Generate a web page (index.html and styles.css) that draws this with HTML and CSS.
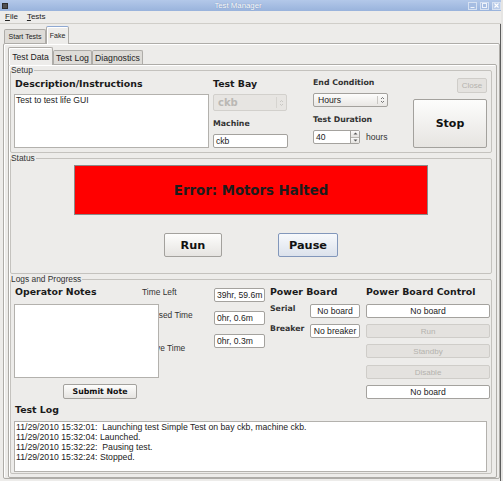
FILE: index.html
```html
<!DOCTYPE html>
<html lang="en">
<head>
<meta charset="utf-8">
<title>Test Manager</title>
<link rel="stylesheet" href="styles.css">
</head>
<body>
<div class="window">
  <div class="titlebar">
    <span class="app-icon"></span>
    <span class="title">Test Manager</span>
    <span class="wbtns">
      <span class="wbtn"><svg width="5" height="5" viewBox="0 0 5 5"><path d="M0.5 4.5H4.5" stroke="#eef3fb" stroke-width="1"/></svg></span>
      <span class="wbtn"><svg width="5" height="5" viewBox="0 0 5 5"><rect x="0.5" y="0.5" width="4" height="4" fill="none" stroke="#eef3fb" stroke-width="1"/></svg></span>
      <span class="wbtn close"><svg width="5" height="5" viewBox="0 0 5 5"><path d="M0.5 0.5L4.5 4.5M4.5 0.5L0.5 4.5" stroke="#ffffff" stroke-width="1.1"/></svg></span>
    </span>
  </div>
  <div class="menubar">
    <span class="menu"><u>F</u>ile</span>
    <span class="menu"><u>T</u>ests</span>
  </div>
  <div class="client">
    <div class="tabrow outer-tabs">
      <div class="tab otab">Start Tests</div>
      <div class="tab otab selected">Fake</div>
    </div>
    <div class="pane outer-pane">
      <div class="tabrow inner-tabs">
        <div class="tab itab selected">Test Data</div>
        <div class="tab itab">Test Log</div>
        <div class="tab itab">Diagnostics</div>
      </div>
      <div class="pane inner-pane">
        <fieldset class="group setup">
          <legend>Setup</legend>
          <div class="setup-row">
            <div class="col col-desc">
              <div class="heading">Description/Instructions</div>
              <div class="textarea desc">Test to test life GUI</div>
            </div>
            <div class="col col-bay">
              <div class="heading">Test Bay</div>
              <div class="combo bay disabled">
                <span class="combo-text">ckb</span>
                <span class="combo-arrow"><svg width="5" height="8" viewBox="0 0 5 8"><path d="M1 3L2.5 1.5L4 3M1 5L2.5 6.5L4 5" fill="none" stroke="#c2c0bc" stroke-width="0.8"/></svg></span>
              </div>
              <div class="label machine-label">Machine</div>
              <div class="field machine">ckb</div>
            </div>
            <div class="col col-end">
              <div class="label">End Condition</div>
              <div class="combo hours">
                <span class="combo-text">Hours</span>
                <span class="combo-arrow"><svg width="5" height="8" viewBox="0 0 5 8"><path d="M1 3L2.5 1.5L4 3M1 5L2.5 6.5L4 5" fill="none" stroke="#555" stroke-width="0.8"/></svg></span>
              </div>
              <div class="label duration-label">Test Duration</div>
              <div class="spin-row">
                <div class="spinner">
                  <span class="spin-text">40</span>
                  <span class="spin-btns">
                    <span class="spin-btn"><svg width="5" height="3" viewBox="0 0 5 3"><path d="M0.5 2.5L2.5 0.5L4.5 2.5Z" fill="#555"/></svg></span>
                    <span class="spin-btn"><svg width="5" height="3" viewBox="0 0 5 3"><path d="M0.5 0.5L2.5 2.5L4.5 0.5Z" fill="#555"/></svg></span>
                  </span>
                </div>
                <span class="unit">hours</span>
              </div>
            </div>
            <div class="col col-actions">
              <div class="btn close-btn disabled">Close</div>
              <div class="btn stop-btn">Stop</div>
            </div>
          </div>
        </fieldset>

        <fieldset class="group status">
          <legend>Status</legend>
          <div class="status-box">Error: Motors Halted</div>
          <div class="btn-row">
            <div class="btn big-btn run-btn">Run</div>
            <div class="btn big-btn pause-btn default">Pause</div>
          </div>
        </fieldset>

        <fieldset class="group logs">
          <legend>Logs and Progress</legend>
          <div class="logs-top">
            <div class="col notes-col">
              <div class="heading">Operator Notes</div>
              <div class="textarea notes"></div>
              <div class="btn submit-btn">Submit Note</div>
            </div>
            <div class="col time-labels">
              <div class="tlabel t1">Time Left</div>
              <div class="tlabel t2">Elapsed Time</div>
              <div class="tlabel t3">Active Time</div>
            </div>
            <div class="col time-fields">
              <div class="field tf f1">39hr, 59.6m</div>
              <div class="field tf">0hr, 0.6m</div>
              <div class="field tf">0hr, 0.3m</div>
            </div>
            <div class="col power-col">
              <div class="heading">Power Board</div>
              <div class="pb-grid">
                <div class="label">Serial</div>
                <div class="field center">No board</div>
                <div class="label">Breaker</div>
                <div class="field center">No breaker</div>
              </div>
            </div>
            <div class="col control-col">
              <div class="heading">Power Board Control</div>
              <div class="field center ctl">No board</div>
              <div class="btn ctl disabled">Run</div>
              <div class="btn ctl disabled">Standby</div>
              <div class="btn ctl disabled gap7">Disable</div>
              <div class="field center ctl">No board</div>
            </div>
          </div>
          <div class="heading testlog-heading">Test Log</div>
          <div class="textarea log">11/29/2010 15:32:01:  Launching test Simple Test on bay ckb, machine ckb.
11/29/2010 15:32:04: Launched.
11/29/2010 15:32:22:  Pausing test.
11/29/2010 15:32:24: Stopped.</div>
        </fieldset>
      </div>
    </div>
  </div>
</div>
</body>
</html>
```
FILE: styles.css
```css
* { box-sizing: border-box; }
html, body { margin: 0; padding: 0; }
body {
  width: 503px;
  height: 481px;
  overflow: hidden;
  background: #e6e5e3;
  font-family: "Liberation Sans", Arial, sans-serif;
  font-size: 8.6px;
  color: #1f1f1f;
}
.window {
  width: 501px;
  height: 481px;
  display: flex;
  flex-direction: column;
  background: #edecea;
}

/* title bar */
.titlebar {
  flex: none;
  height: 11px;
  display: flex;
  align-items: center;
  padding-left: 2px;
  background: linear-gradient(#b3c8e9, #99b3dc);
}
.app-icon {
  flex: none;
  width: 6px;
  height: 6px;
  background: #505050;
  border: 1px solid #2e2e2e;
}
.title {
  flex: 1;
  text-align: center;
  color: #ffffff;
  font-size: 7.8px;
  line-height: 11px;
  text-shadow: 0 0 1px #5d79a8;
}
.wbtns { display: flex; gap: 3px; }
.wbtn {
  width: 9px;
  height: 8px;
  border: 1px solid #d6e1f2;
  background: #a6bde2;
  display: flex;
  align-items: center;
  justify-content: center;
}
.wbtn.close { background: #b9cbe8; }

/* menu bar */
.menubar {
  flex: none;
  height: 13px;
  display: flex;
  align-items: center;
  gap: 9px;
  padding-left: 5px;
  border-bottom: 1px solid #d0cec9;
  font-size: 8px;
  line-height: 12px;
  color: #222;
}
.menu u { text-decoration: underline; text-underline-offset: 1px; }

/* client + tabs */
.client {
  flex: 1;
  border-right: 1px solid #5c5c5c;
  padding-top: 2px;
}
.tabrow {
  display: flex;
  align-items: flex-end;
  position: relative;
  z-index: 2;
  height: 18px;
  margin-bottom: -1px;
}
.outer-tabs { padding-left: 4px; }
.tab {
  height: 14px;
  margin-bottom: 1px;
  border: 1px solid #aeaca8;
  border-bottom: none;
  border-radius: 2px 2px 0 0;
  background: #dedcd8;
  display: flex;
  align-items: center;
  justify-content: center;
  color: #222;
  white-space: nowrap;
}
.tab.selected {
  height: 18px;
  margin-bottom: 0;
  background: #edecea;
  box-shadow: inset 1px 1px 0 #ffffff;
}
.otab { font-size: 7px; padding: 0 4px; }
.otab:first-child { width: 42px; }
.otab.selected { width: 23px; border-top-color: #8ea8d2; }
.itab { font-size: 8.7px; }
.itab:nth-child(1) { width: 45px; }
.itab:nth-child(2) { width: 39px; }
.itab:nth-child(3) { width: 51px; }

.pane {
  border: 1px solid #aeaca8;
  border-radius: 2px;
  box-shadow: inset 1px 1px 0 #ffffff;
  background: #edecea;
}
.outer-pane {
  margin-left: 3px;
  width: 497px;
  height: 436px;
  padding: 3px 0 0 4px;
}
.inner-pane {
  width: 489px;
  height: 414px;
  padding: 0 0 0 1px;
}

/* groups */
.group {
  margin: 0;
  padding: 3px 0 4px 0;
  width: 482px;
  min-width: 0;
  border: 1px solid #c4c2be;
  border-radius: 2px;
}
.group legend {
  padding: 0 1px 0 0;
  margin: 0;
  font-size: 8.4px;
  line-height: 10px;
  color: #333;
}
.group.status { padding: 2px 0 16px 0; }
.group.logs { padding: 2px 0 1px 0; }

.heading {
  font-family: "DejaVu Sans", sans-serif;
  font-weight: bold;
  font-size: 9.4px;
  line-height: 12px;
  color: #1a1a1a;
  white-space: nowrap;
}
.label {
  font-family: "DejaVu Sans", sans-serif;
  font-weight: bold;
  font-size: 7.8px;
  line-height: 10px;
  color: #333;
  white-space: nowrap;
}

.textarea {
  background: #ffffff;
  border: 1px solid #b3b1ad;
  line-height: 10px;
  padding: 0 1px;
  color: #222;
}
.field {
  background: #ffffff;
  border: 1px solid #a4a29e;
  border-radius: 2px;
  height: 14px;
  line-height: 12px;
  padding: 0 2px;
  overflow: hidden;
  white-space: nowrap;
  color: #222;
}
.field.center { text-align: center; padding: 0; }

.btn {
  display: flex;
  align-items: center;
  justify-content: center;
  border: 1px solid #a3a19d;
  border-radius: 2px;
  background: linear-gradient(#fdfdfc, #e6e4e1);
  color: #111;
  white-space: nowrap;
}
.btn.disabled {
  background: #e4e2df;
  border-color: #cfcdc9;
  color: #b4b2ae;
}
.btn.default {
  border-color: #8297bb;
  background: linear-gradient(#f7f9fc, #dce2ec);
}

/* setup */
.setup-row { display: flex; align-items: flex-start; }
.col { display: flex; flex-direction: column; align-items: flex-start; }
.col-desc { margin-left: 3px; width: 195px; }
.col-desc .heading { padding-left: 1px; }
.col-bay { margin-left: 4px; width: 76px; }
.col-end { margin-left: 24px; width: 90px; }
.col-actions { margin-left: 10px; width: 74px; align-items: flex-end; }

.textarea.desc { margin-top: 4px; width: 195px; height: 54px; }

.combo {
  display: flex;
  align-items: stretch;
  border-radius: 2px;
}
.combo-text { flex: 1; display: flex; align-items: center; }
.combo-arrow {
  width: 10px;
  display: flex;
  align-items: center;
  justify-content: center;
}
.combo.bay {
  margin-top: 4px;
  width: 74px;
  height: 17px;
  border: 1px solid #d2d0cc;
  background: #e7e5e2;
}
.combo.bay .combo-text {
  padding-left: 4px;
  font-family: "DejaVu Sans", sans-serif;
  font-weight: bold;
  font-size: 10px;
  color: #bab8b4;
}
.combo.bay .combo-arrow { border-left: 1px solid #d6d4d0; margin: 2px 0; }
.machine-label { margin-top: 8px; }
.field.machine { margin-top: 5px; width: 75px; }

.combo.hours {
  margin-top: 5px;
  width: 75px;
  height: 14px;
  border: 1px solid #a3a19d;
  background: linear-gradient(#fdfdfc, #e9e7e4);
}
.combo.hours .combo-text { padding-left: 4px; color: #222; }
.combo.hours .combo-arrow { border-left: 1px solid #c9c7c3; margin: 2px 0; }
.duration-label { margin-top: 8px; }
.spin-row { margin-top: 5px; display: flex; align-items: center; }
.spinner {
  width: 47px;
  height: 14px;
  display: flex;
  border: 1px solid #a4a29e;
  border-radius: 2px;
  background: #ffffff;
}
.spin-text { flex: 1; padding-left: 2px; line-height: 12px; color: #222; }
.spin-btns {
  width: 9px;
  display: flex;
  flex-direction: column;
  border-left: 1px solid #a4a29e;
}
.spin-btn {
  flex: 1;
  display: flex;
  align-items: center;
  justify-content: center;
  background: linear-gradient(#fbfbfa, #e4e2df);
}
.spin-btn + .spin-btn { border-top: 1px solid #b9b7b3; }
.unit { margin-left: 6px; color: #333; }

.close-btn { width: 30px; height: 15px; font-size: 8px; }
.stop-btn {
  margin-top: 6px;
  width: 74px;
  height: 49px;
  font-family: "DejaVu Sans", sans-serif;
  font-weight: bold;
  font-size: 11px;
}

/* status */
.status-box {
  width: 354px;
  height: 50px;
  margin: 0 auto;
  background: #ff0000;
  border: 1px solid #8a8a8a;
  display: flex;
  align-items: center;
  justify-content: center;
  font-family: "DejaVu Sans", sans-serif;
  font-weight: bold;
  font-size: 13.3px;
  color: #1c1c1c;
}
.btn-row {
  display: flex;
  justify-content: center;
  gap: 56px;
  margin-top: 18px;
}
.big-btn {
  height: 24px;
  font-family: "DejaVu Sans", sans-serif;
  font-weight: bold;
  font-size: 11.3px;
}
.run-btn { width: 58px; }
.pause-btn { width: 60px; }

/* logs */
.logs-top { display: flex; align-items: flex-start; }
.notes-col { margin-left: 3px; width: 128px; }
.notes-col .heading { padding-left: 1px; }
.textarea.notes {
  width: 145px;
  height: 74px;
  margin-top: 6px;
  position: relative;
  z-index: 1;
}
.submit-btn {
  margin-top: 6px;
  margin-left: 49px;
  width: 74px;
  height: 15px;
  font-family: "DejaVu Sans", sans-serif;
  font-weight: bold;
  font-size: 7.8px;
}
.time-labels { width: 72px; }
.tlabel { line-height: 10px; color: #333; white-space: nowrap; font-size: 8.4px; }
.tlabel.t1 { margin-top: 1px; }
.tlabel.t2 { margin-top: 13px; }
.tlabel.t3 { margin-top: 23px; }
.time-fields { width: 56px; }
.field.tf { width: 51px; margin-top: 9px; padding-left: 2px; }
.field.tf.f1 { margin-top: 2px; }
.power-col { width: 96px; }
.pb-grid {
  display: grid;
  grid-template-columns: 40px 50px;
  grid-auto-rows: 14px;
  row-gap: 6px;
  margin-top: 6px;
}
.control-col { width: 124px; }
.control-col .ctl { width: 124px; height: 14px; margin-top: 6px; }
.control-col .btn.ctl { font-size: 8px; }
.control-col .gap7 { margin-top: 7px; }

.testlog-heading { margin: 5px 0 0 4px; }
.textarea.log {
  margin: 5px 0 0 3px;
  width: 473px;
  height: 51px;
  white-space: pre;
  font-size: 8.7px;
}
```
